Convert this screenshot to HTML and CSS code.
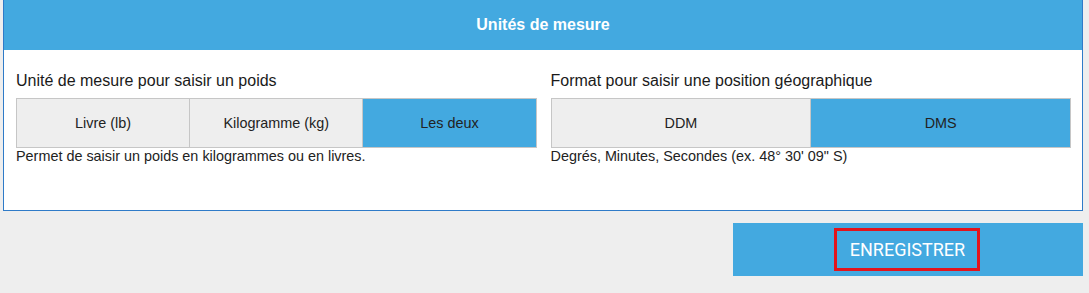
FILE: index.html
```html
<!DOCTYPE html>
<html lang="fr">
<head>
<meta charset="utf-8">
<title>Unités de mesure</title>
<link rel="stylesheet" href="styles.css">
</head>
<body>
<div class="page">
  <section class="card">
    <header class="card-header">Unités de mesure</header>
    <div class="card-body">
      <div class="field">
        <div class="field-label">Unité de mesure pour saisir un poids</div>
        <div class="toggle-group">
          <button class="toggle">Livre (lb)</button>
          <button class="toggle">Kilogramme (kg)</button>
          <button class="toggle active">Les deux</button>
        </div>
        <div class="field-help">Permet de saisir un poids en kilogrammes ou en livres.</div>
      </div>
      <div class="field">
        <div class="field-label">Format pour saisir une position géographique</div>
        <div class="toggle-group">
          <button class="toggle">DDM</button>
          <button class="toggle active">DMS</button>
        </div>
        <div class="field-help">Degrés, Minutes, Secondes (ex. 48° 30' 09" S)</div>
      </div>
    </div>
  </section>
  <div class="actions">
    <button class="save"><span class="save-label">ENREGISTRER</span></button>
  </div>
</div>
</body>
</html>
```

FILE: styles.css
```css
html, body {
  margin: 0;
  padding: 0;
  background: #eeeeee;
}

body {
  font-family: "Liberation Sans", Arial, sans-serif;
  color: #222222;
  height: 293px;
  overflow: hidden;
}

.page {
  padding: 0 6px 0 3px;
}

.card {
  background: #ffffff;
  border: 1px solid #2f7bc8;
  border-top: 0;
}

.card-header {
  background: #43a9e0;
  color: #ffffff;
  font-weight: bold;
  font-size: 16px;
  line-height: 18px;
  height: 50px;
  display: flex;
  align-items: center;
  justify-content: center;
  padding-bottom: 1px;
  box-sizing: border-box;
}

.card-body {
  display: grid;
  grid-template-columns: 1fr 1fr;
  column-gap: 14px;
  padding: 22px 11px 46px 12px;
}

.field-label {
  font-size: 16px;
  line-height: 18px;
  margin-bottom: 8px;
  color: #1a1a1a;
}

.toggle-group {
  display: flex;
  border: 1px solid #c6c6c6;
  height: 48px;
}

.toggle {
  flex: 1;
  border: 0;
  margin: 0;
  padding: 0;
  background: #eeeeee;
  font-family: "Liberation Sans", Arial, sans-serif;
  font-size: 14.4px;
  color: #222222;
}

.toggle + .toggle {
  border-left: 1px solid #c6c6c6;
}

.toggle.active {
  background: #43a9e0;
}

.field-help {
  font-size: 14.4px;
  line-height: 16px;
  color: #222222;
}

.actions {
  display: flex;
  justify-content: flex-end;
  padding-top: 12px;
}

.save {
  width: 350px;
  height: 53px;
  margin: 0;
  border: 0;
  background: #43a9e0;
  display: flex;
  align-items: center;
  justify-content: center;
  padding: 0;
}

.save-label {
  font-family: Roboto, "Liberation Sans", sans-serif;
  font-size: 18px;
  line-height: 21px;
  color: #ffffff;
  border: 3px solid #e3141c;
  padding: 8px 12px 8px 13px;
  margin-right: 2px;
}
```
